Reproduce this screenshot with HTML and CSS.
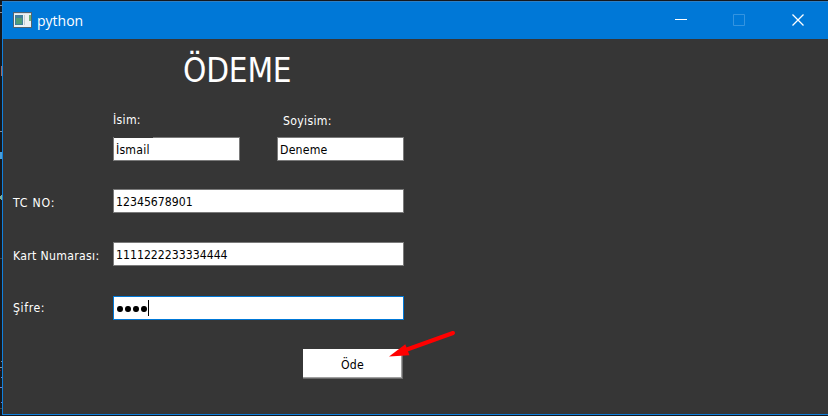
FILE: index.html
```html
<!DOCTYPE html>
<html lang="tr">
<head>
<meta charset="utf-8">
<title>python</title>
<link rel="stylesheet" href="styles.css">
</head>
<body>
<div class="desktop">
  <svg class="backdrop" width="2" height="416" shape-rendering="crispEdges">
    <path fill="#8a8f94" d="M0 5h2v1H0zM0 12h2v1H0zM0 131h2v1H0zM1 361h1v1H1zM0 367h2v1H0z"/>
    <path fill="#9a6a68" d="M1 66h1v10H1z"/>
    <path fill="#4d9fd8" d="M0 152h2v7H0z"/>
    <path fill="#7fae98" d="M0 196h1v3H0zM1 195h1v5H1z"/>
    <path fill="#6d7fd0" d="M1 377h1v1H1zM0 387h2v1H0zM1 402h1v1H1z"/>
    <path fill="#7a1420" d="M0 370h1v1H0z"/>
    <path fill="#444" d="M0 258h2v1H0zM0 408h2v1H0z"/>
  </svg>
  <main class="window">
    <header class="titlebar">
      <svg class="app-icon" width="19" height="16" shape-rendering="crispEdges">
        <path fill="#53646f" d="M0 0h19v16H0z"/>
        <path fill="#eef1f2" d="M1 1h17v14H1z"/>
        <path fill="#d5dde2" d="M1 1h17v1H1z"/>
        <path fill="#3f7f9c" d="M2 3h8v10H2z"/>
        <path fill="#4f9d78" d="M3 6h6v6H3z"/>
        <path fill="#6ab277" d="M16 3h2v6h-2z"/>
        <path fill="#c5cdd0" d="M11 3h1v10h-1z"/>
      </svg>
      <span class="caption">python</span>
      <svg class="controls" width="131" height="13">
        <path class="minimize" d="M0 6.500h12"/>
        <path class="maximize" d="M58.500 1.500h11v11h-11z"/>
        <path class="close" d="M117.500 1.500l11 11M128.500 1.500l-11 11"/>
      </svg>
    </header>
    <form class="form">
      <h1 class="title">ÖDEME</h1>
      <div class="names">
        <label class="field">
          <span class="label name-label">İsim:</span>
          <span class="input first-name">İsmail</span>
        </label>
        <label class="field">
          <span class="label surname-label">Soyisim:</span>
          <span class="input">Deneme</span>
        </label>
      </div>
      <div class="row tc"><span class="label">TC NO:</span><span class="input number">12345678901</span></div>
      <div class="row card"><span class="label">Kart Numarası:</span><span class="input number">1111222233334444</span></div>
      <div class="row pass"><span class="label">Şifre:</span><span class="input focused"><i class="dot"></i><i class="dot"></i><i class="dot"></i><i class="dot"></i><i class="caret"></i></span></div>
      <button class="pay" type="button">Öde</button>
    </form>
  </main>
  <svg class="arrow" width="70" height="30">
    <path d="M64 4L18 20.500" stroke="#f00" stroke-width="4" stroke-linecap="round"/>
    <path fill="#f00" d="M0 27.500L16.300 15.300L20.500 26.300Z"/>
  </svg>
</div>
</body>
</html>
```

FILE: styles.css
```css
* { box-sizing: border-box; }
body { margin: 0; background: #15181d; }
.desktop {
  position: relative;
  width: 828px;
  height: 416px;
  padding: 1px 0 1px 2px;
  overflow: hidden;
}
.backdrop { position: absolute; left: 0; top: 0; }
.window {
  height: 414px;
  background: #363636;
  border-left: 1px solid #1080dc;
  border-bottom: 1px solid #1080dc;
  font: 12.2px/16px "DejaVu Sans Condensed", "DejaVu Sans", sans-serif;
  font-stretch: condensed;
  color: #fff;
}
.titlebar {
  display: flex;
  height: 38px;
  padding-left: 10px;
  background: #0078d7;
  border-top: 1px solid #2e7fc4;
}
.app-icon { margin-top: 10px; }
.caption {
  margin: 9px 0 0 5px;
  font: 14px/20px "Open Sans", "Noto Sans", sans-serif;
}
.controls { margin: 11px 22px 0 auto; fill: none; stroke: #fff; }
.controls .maximize { stroke: #3494e0; }
.controls .close { stroke-width: 1.3; }
.form { width: 401px; padding-left: 10px; }
.title {
  height: 73px;
  margin: 0;
  padding: 12px 0 0 170px;
  font-size: 33px;
  line-height: 40px;
  font-weight: 400;
  letter-spacing: -0.2px;
}
.names { display: flex; justify-content: space-between; padding-left: 100px; }
.field { display: flex; flex-direction: column; width: 127px; }
.field .label { height: 25px; }
.field .surname-label { padding: 1px 0 0 6px; }
.label { white-space: nowrap; letter-spacing: 0.3px; }
.input {
  display: flex;
  height: 24px;
  padding: 4px 2px 0;
  border: 1px solid #7a7a7a;
  background: #fff;
  color: #000;
  letter-spacing: 0.2px;
}
.input.number { letter-spacing: 0; }
.first-name {
  border-top: 0;
  padding-top: 5px;
  background: linear-gradient(90deg, #363636 40px, #7a7a7a 40px) 0 0 / 100% 1px no-repeat border-box, #fff;
}
.row { display: grid; grid-template-columns: 100px 291px; }
.row .label { padding-top: 6px; }
.tc { margin-top: 28px; }
.tc .label { letter-spacing: 0.8px; }
.card { margin-top: 29px; }
.pass { margin-top: 30px; }
.pass .label { padding-top: 4px; letter-spacing: 0.6px; }
.input.focused { padding-top: 3px; border-color: #0078d7; }
.dot { width: 6px; height: 6.5px; margin: 5.5px 1px 0; border-radius: 50%; background: #000; }
.caret { width: 1px; height: 16px; background: #000; }
.pay {
  display: block;
  width: 100px;
  height: 30px;
  margin: 29px 0 0 290px;
  padding: 1px 1px 0 0;
  border: 0;
  background: #fff;
  box-shadow: inset -1px -1px #696969, inset -2px -2px #a0a0a0;
  font: inherit;
  letter-spacing: 0.2px;
  color: #000;
}
.arrow { position: absolute; left: 389px; top: 329px; fill: none; }
```
